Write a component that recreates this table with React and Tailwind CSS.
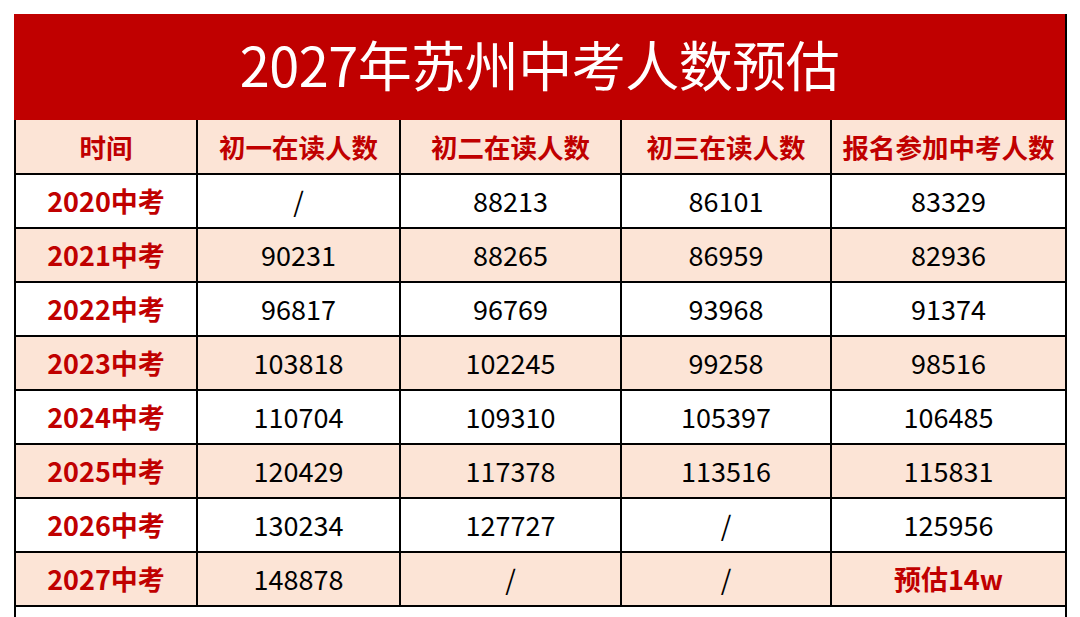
import React from "react";

const rows = [
  ["2020中考", "/", "88213", "86101", "83329"],
  ["2021中考", "90231", "88265", "86959", "82936"],
  ["2022中考", "96817", "96769", "93968", "91374"],
  ["2023中考", "103818", "102245", "99258", "98516"],
  ["2024中考", "110704", "109310", "105397", "106485"],
  ["2025中考", "120429", "117378", "113516", "115831"],
  ["2026中考", "130234", "127727", "/", "125956"],
  ["2027中考", "148878", "/", "/", "预估14w"],
];

const headers = ["时间", "初一在读人数", "初二在读人数", "初三在读人数", "报名参加中考人数"];

export default function App() {
  return (
    <div
      className="w-[1080px] h-[617px] bg-white pt-[14px] pl-[14px] flex flex-col overflow-hidden"
      style={{ fontFamily: '"Noto Sans CJK SC", "Noto Sans", sans-serif' }}
    >
      <div className="w-[1053px] h-[106px] bg-[#c00000] flex items-center justify-center pb-[6px] text-white text-[54px] leading-none tracking-[-0.5px] border-r-2 border-black">
        2027年苏州中考人数预估
      </div>
      <div className="w-[1053px] flex-1 flex flex-col border-l-2 border-r-2 border-black">
        <div className="grid grid-cols-[182px_203px_221px_210px_233px] h-[55px] bg-[#fce4d6] border-b-2 border-black">
          {headers.map((h, i) => (
            <div
              key={i}
              className={`flex items-center justify-center text-[#c00000] font-bold text-[26.5px] ${i < 4 ? "border-r-2 border-black" : ""}`}
            >
              {h}
            </div>
          ))}
        </div>
        {rows.map((r, ri) => (
          <div
            key={ri}
            className={`grid grid-cols-[182px_203px_221px_210px_233px] h-[54px] border-b-2 border-black ${ri % 2 === 1 ? "bg-[#fce4d6]" : "bg-white"}`}
          >
            {r.map((c, ci) => {
              const red = ci === 0 || c === "预估14w";
              return (
                <div
                  key={ci}
                  className={`flex items-center justify-center text-[27px] ${red ? "text-[#c00000] font-bold" : "text-black"} ${ci < 4 ? "border-r-2 border-black" : ""}`}
                >
                  {c}
                </div>
              );
            })}
          </div>
        ))}
        <div className="flex-1 bg-white" />
      </div>
    </div>
  );
}
